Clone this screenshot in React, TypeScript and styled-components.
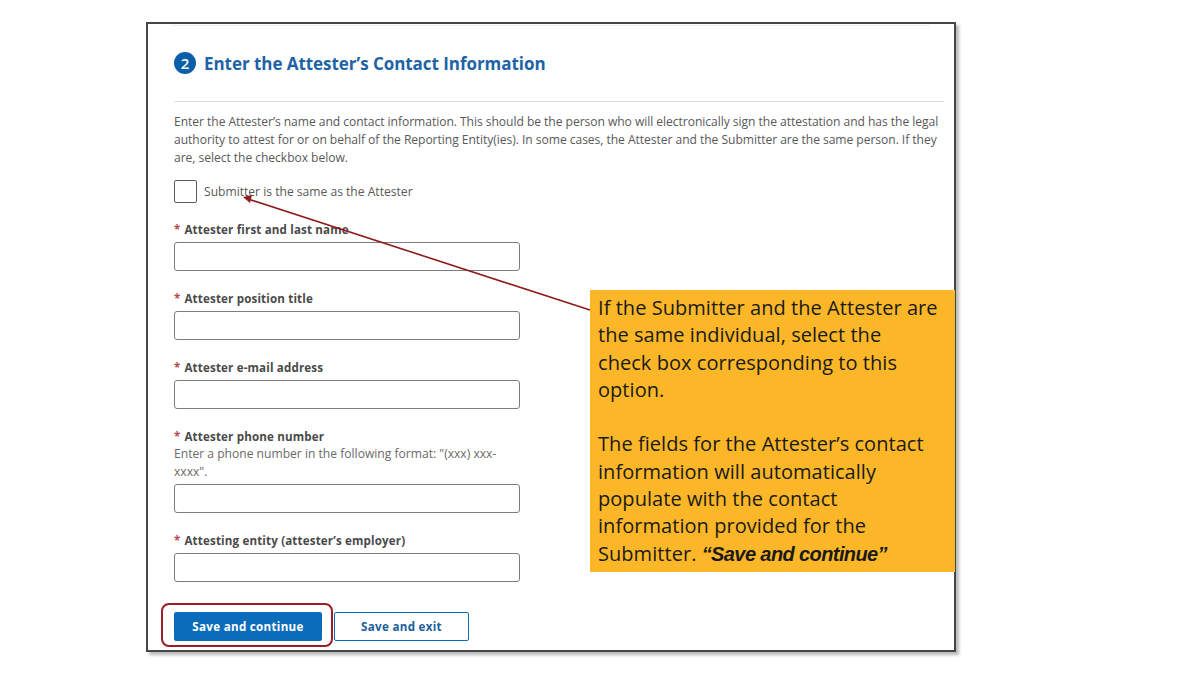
import React from "react";
import styled, { createGlobalStyle } from "styled-components";

const GlobalStyle = createGlobalStyle`
  html, body {
    margin: 0;
    padding: 0;
    background: #ffffff;
  }
  body {
    font-family: "Open Sans", "Liberation Sans", sans-serif;
  }
`;

const Page = styled.div`
  width: 1200px;
  height: 675px;
  padding: 22px 0 0 146px;
  box-sizing: border-box;
`;

const Frame = styled.div`
  position: relative;
  width: 810px;
  height: 630px;
  box-sizing: border-box;
  border: 2px solid #474747;
  box-shadow: 3px 3px 3px rgba(0, 0, 0, 0.28);
  background: #fff;
`;

const TopRule = styled.div`
  height: 1px;
  margin: 1px 24px 0 24px;
  background: #ececec;
`;

const Heading = styled.div`
  display: flex;
  align-items: center;
  gap: 8px;
  margin: 26px 0 0 26px;
  height: 22px;
`;

const StepBadge = styled.span`
  width: 22px;
  height: 22px;
  border-radius: 50%;
  background: #0b5ea8;
  color: #fff;
  font-size: 15px;
  font-weight: 600;
  display: flex;
  align-items: center;
  justify-content: center;
  line-height: 1;
`;

const Title = styled.h2`
  margin: 0;
  font-size: 17px;
  font-weight: 700;
  color: #1d63a6;
  letter-spacing: -0.05px;
`;

const Divider = styled.div`
  height: 1px;
  margin: 27px 10px 0 26px;
  background: #dedede;
`;

const Intro = styled.p`
  margin: 11px 0 0 26px;
  width: 790px;
  font-size: 12.1px;
  line-height: 18px;
  color: #595959;
  letter-spacing: -0.05px;
  white-space: nowrap;
`;

const CheckRow = styled.label`
  display: flex;
  align-items: center;
  gap: 7px;
  margin: 13px 0 0 26px;
  font-size: 12.1px;
  color: #595959;
`;

const Box = styled.span`
  width: 23px;
  height: 23px;
  box-sizing: border-box;
  border: 1px solid #5c5c5c;
  border-radius: 2px;
  background: #fff;
`;

const Form = styled.div`
  margin: 19px 0 0 26px;
  display: flex;
  flex-direction: column;
`;

const Field = styled.div<{ $gap?: number }>`
  display: flex;
  flex-direction: column;
  margin-bottom: ${(p) => p.$gap ?? 20}px;
`;

const Label = styled.div`
  font-size: 11.6px;
  line-height: 16px;
  font-weight: 700;
  color: #4a4a4a;
  letter-spacing: 0.15px;
  margin-bottom: 4px;
`;

const Star = styled.span`
  color: #b8454a;
  margin-right: 4px;
`;

const Hint = styled.div`
  width: 335px;
  font-size: 12.1px;
  line-height: 18px;
  color: #6a6a6a;
  margin: -4px 0 3px;
`;

const TextInput = styled.input`
  width: 346px;
  height: 29px;
  box-sizing: border-box;
  border: 1px solid #7d7d7d;
  border-radius: 3px;
  background: #fff;
  outline: none;
`;

const Actions = styled.div`
  display: flex;
  gap: 12px;
  margin-top: 30px;
`;

const Highlight = styled.div`
  position: relative;

  &::before {
    content: "";
    position: absolute;
    left: -13px;
    right: -11px;
    top: -9px;
    bottom: -6px;
    border: 2px solid #9b1d25;
    border-radius: 8px;
    pointer-events: none;
  }
`;

const Button = styled.button<{ $primary?: boolean; $width: number }>`
  width: ${(p) => p.$width}px;
  height: 29px;
  box-sizing: border-box;
  border-radius: 2px;
  border: 1px solid #0b6cbc;
  background: ${(p) => (p.$primary ? "#0b6cbc" : "#fff")};
  color: ${(p) => (p.$primary ? "#fff" : "#1b5f9d")};
  font-family: "Open Sans", "Liberation Sans", sans-serif;
  font-size: 11.6px;
  font-weight: 700;
  letter-spacing: 0.3px;
  cursor: pointer;
`;

const Callout = styled.div`
  position: absolute;
  left: 442px;
  top: 266px;
  width: 365px;
  height: 282px;
  box-sizing: border-box;
  padding: 4px 8px 0 8px;
  background: #fbb727;
  color: #1a1a1a;
  font-family: "Open Sans", "Liberation Sans", sans-serif;
  font-size: 20px;
  line-height: 27.3px;
  letter-spacing: 0.05px;
  white-space: nowrap;
`;

const CalloutPara = styled.p`
  margin: 0 0 27.3px;
`;

const Emph = styled.em`
  font-family: "Liberation Sans", Arial, sans-serif;
  font-weight: 700;
  font-size: 20px;
  letter-spacing: -0.6px;
`;

const Pointer = styled.svg`
  position: absolute;
  left: 0;
  top: 0;
  width: 100%;
  height: 100%;
  pointer-events: none;
  overflow: visible;
`;

const fields = [
  { label: "Attester first and last name" },
  { label: "Attester position title" },
  { label: "Attester e-mail address" },
  {
    label: "Attester phone number",
    hint: 'Enter a phone number in the following format: "(xxx) xxx-xxxx".',
  },
  { label: "Attesting entity (attester’s employer)", gap: 0 },
];

export default function App() {
  return (
    <>
      <GlobalStyle />
      <Page>
        <Frame>
          <TopRule />
          <Heading>
            <StepBadge>2</StepBadge>
            <Title>Enter the Attester’s Contact Information</Title>
          </Heading>
          <Divider />
          <Intro>
            Enter the Attester’s name and contact information. This should be
            the person who will electronically sign the attestation and has the
            legal
            <br />
            authority to attest for or on behalf of the Reporting Entity(ies).
            In some cases, the Attester and the Submitter are the same person.
            If they
            <br />
            are, select the checkbox below.
          </Intro>
          <CheckRow>
            <Box />
            Submitter is the same as the Attester
          </CheckRow>
          <Form>
            {fields.map((f) => (
              <Field key={f.label} $gap={f.gap}>
                <Label>
                  <Star>*</Star>
                  {f.label}
                </Label>
                {f.hint && <Hint>{f.hint}</Hint>}
                <TextInput type="text" />
              </Field>
            ))}
            <Actions>
              <Highlight>
                <Button $primary $width={148}>
                  Save and continue
                </Button>
              </Highlight>
              <Button $width={135}>Save and exit</Button>
            </Actions>
          </Form>

          <Callout>
            <CalloutPara>
              If the Submitter and the Attester are
              <br />
              the same individual, select the
              <br />
              check box corresponding to this
              <br />
              option.
            </CalloutPara>
            <CalloutPara>
              The fields for the Attester’s contact
              <br />
              information will automatically
              <br />
              populate with the contact
              <br />
              information provided for the
              <br />
              Submitter. <Emph>“Save and continue”</Emph>
            </CalloutPara>
          </Callout>

          <Pointer viewBox="0 0 806 626">
            <line
              x1="442"
              y1="286"
              x2="100"
              y2="175"
              stroke="#8e1b1e"
              strokeWidth="1.6"
            />
            <polygon points="95,173 104,171 102,179" fill="#8e1b1e" />
          </Pointer>
        </Frame>
      </Page>
    </>
  );
}
